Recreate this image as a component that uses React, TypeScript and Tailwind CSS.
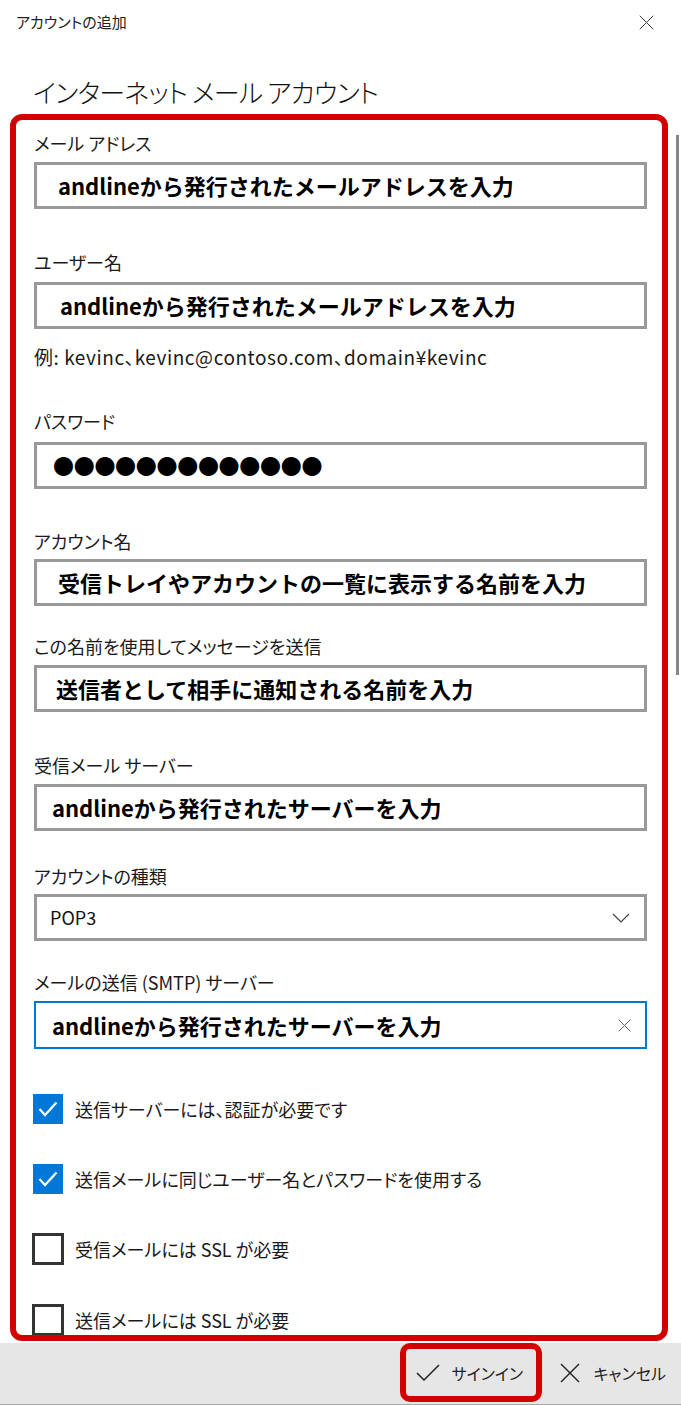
import React from "react";

type Field = {
  label: string;
  value: string;
  labelMt: string;
  inputMt: string;
  padL: string;
};

const FIELDS: Field[] = [
  { label: "メール アドレス", value: "andlineから発行されたメールアドレスを入力", labelMt: "mt-0", inputMt: "mt-[7px]", padL: "pl-[21px]" },
  { label: "ユーザー名", value: "andlineから発行されたメールアドレスを入力", labelMt: "mt-[41px]", inputMt: "mt-[8px]", padL: "pl-[23px]" },
];

const FIELDS2: Field[] = [
  { label: "アカウント名", value: "受信トレイやアカウントの一覧に表示する名前を入力", labelMt: "mt-[40px]", inputMt: "mt-[6px]", padL: "pl-[21px]" },
  { label: "この名前を使用してメッセージを送信", value: "送信者として相手に通知される名前を入力", labelMt: "mt-[28px]", inputMt: "mt-[7px]", padL: "pl-[19px]" },
  { label: "受信メール サーバー", value: "andlineから発行されたサーバーを入力", labelMt: "mt-[41px]", inputMt: "mt-[7px]", padL: "pl-[15px]" },
];

const CHECKS = [
  { label: "送信サーバーには、認証が必要です", checked: true, mt: "mt-[45px]" },
  { label: "送信メールに同じユーザー名とパスワードを使用する", checked: true, mt: "mt-[40px]" },
  { label: "受信メールには SSL が必要", checked: false, mt: "mt-[39px]" },
  { label: "送信メールには SSL が必要", checked: false, mt: "mt-[39px]" },
];

function Label({ text, mt }: { text: string; mt: string }) {
  return <div className={`${mt} text-[18px] leading-[24px] text-[#1a1a1a] [font-feature-settings:'palt']`}>{text}</div>;
}

function TextBox({ f }: { f: Field }) {
  return (
    <>
      <Label text={f.label} mt={f.labelMt} />
      <div
        className={`${f.inputMt} h-[47px] border-[3px] border-[#999999] flex items-center ${f.padL} text-[22px] font-bold text-black`}
      >
        {f.value}
      </div>
    </>
  );
}

function XIcon({ size, stroke = 1.3 }: { size: number; stroke?: number }) {
  return (
    <svg width={size} height={size} viewBox="0 0 20 20" fill="none" stroke="currentColor" strokeWidth={stroke}>
      <line x1="1" y1="1" x2="19" y2="19" />
      <line x1="19" y1="1" x2="1" y2="19" />
    </svg>
  );
}

export default function App() {
  return (
    <div className="w-[681px] h-[1405px] bg-white flex flex-col overflow-hidden text-black font-['Noto_Sans_CJK_JP','Noto_Sans',sans-serif]">
      {/* タイトルバー */}
      <div className="h-[45px] flex items-center justify-between pl-[16px] pr-[27px]">
        <span className="text-[15px] text-[#222] [font-feature-settings:'palt']">アカウントの追加</span>
        <span className="text-[#333]">
          <XIcon size={15} />
        </span>
      </div>

      {/* 見出し */}
      <div className="h-[69px] pl-[33px] pt-[30px]">
        <h1 className="text-[26px] leading-[34px] font-light tracking-[-0.8px] text-[#111] [font-feature-settings:'palt']">
          インターネット メール アカウント
        </h1>
      </div>

      {/* フォーム */}
      <div className="flex h-[1229px]">
        <div className="ml-[10px] w-[658px] h-[1227px] border-[6px] border-[#d40000] rounded-[12px] overflow-hidden">
          <div className="pl-[18px] pr-[15px] pt-[11px]">
            {FIELDS.map((f) => (
              <TextBox key={f.label} f={f} />
            ))}
            <div className="mt-[16px] text-[19px] leading-[24px] tracking-[0.55px] text-[#1a1a1a] [font-feature-settings:'palt']">
              例: kevinc、kevinc@contoso.com、domain¥kevinc
            </div>

            <Label text="パスワード" mt="mt-[40px]" />
            <div className="mt-[9px] h-[47px] border-[3px] border-[#999999] flex items-center pl-[16px] text-[21px] leading-none tracking-[-0.3px]">
              ●●●●●●●●●●●●●
            </div>

            {FIELDS2.map((f) => (
              <TextBox key={f.label} f={f} />
            ))}

            <Label text="アカウントの種類" mt="mt-[33px]" />
            <div className="mt-[6px] h-[47px] border-[3px] border-[#999999] flex items-center justify-between pl-[13px] pr-[14px]">
              <span className="text-[18px] text-[#111]">POP3</span>
              <svg width="18" height="10" viewBox="0 0 18 10" fill="none" stroke="#444" strokeWidth="1.2">
                <polyline points="1,1 9,9 17,1" />
              </svg>
            </div>

            <Label text="メールの送信 (SMTP) サーバー" mt="mt-[29px]" />
            <div className="mt-[7px] h-[48px] border-2 border-[#0078d7] flex items-center justify-between pl-[16px] pr-[14px]">
              <span className="text-[22px] font-bold">andlineから発行されたサーバーを入力</span>
              <span className="text-[#555]">
                <XIcon size={13} stroke={1.4} />
              </span>
            </div>

            {CHECKS.map((c) => (
              <div key={c.label} className={`${c.mt} flex items-center gap-[12px]`}>
                {c.checked ? (
                  <div className="w-[30px] h-[30px] bg-[#0078d7] flex items-center justify-center -ml-[1px]">
                    <svg width="20" height="16" viewBox="0 0 20 16" fill="none" stroke="white" strokeWidth="2.2">
                      <polyline points="1.5,8 7,14 18.5,1.5" />
                    </svg>
                  </div>
                ) : (
                  <div className="w-[32px] h-[32px] border-[3px] border-[#333333] -ml-[2px] -mr-[1px]" />
                )}
                <span className="text-[18px] leading-[30px] text-[#1a1a1a] [font-feature-settings:'palt']">{c.label}</span>
              </div>
            ))}
          </div>
        </div>
        {/* スクロールバー */}
        <div className="ml-[8px] mt-[21px] w-[3px] h-[540px] bg-[#868686]" />
      </div>

      {/* フッター */}
      <div className="h-[62px] bg-[#e6e6e6] border-b border-[#a8a8a8] flex justify-end items-start pr-[15px]">
        <div className="w-[142px] h-[59px] border-[6px] border-[#d40000] rounded-[10px] flex items-center pl-[10px] gap-[12px]">
          <svg width="24" height="17" viewBox="0 0 24 17" fill="none" stroke="#222" strokeWidth="1.5">
            <polyline points="1,9 8,16 23,1" />
          </svg>
          <span className="text-[16px] text-[#222] [font-feature-settings:'palt']">サインイン</span>
        </div>
        <div className="ml-[18px] h-[59px] flex items-center gap-[14px] text-[#222]">
          <XIcon size={20} stroke={1.4} />
          <span className="text-[16px] [font-feature-settings:'palt']">キャンセル</span>
        </div>
      </div>
    </div>
  );
}
